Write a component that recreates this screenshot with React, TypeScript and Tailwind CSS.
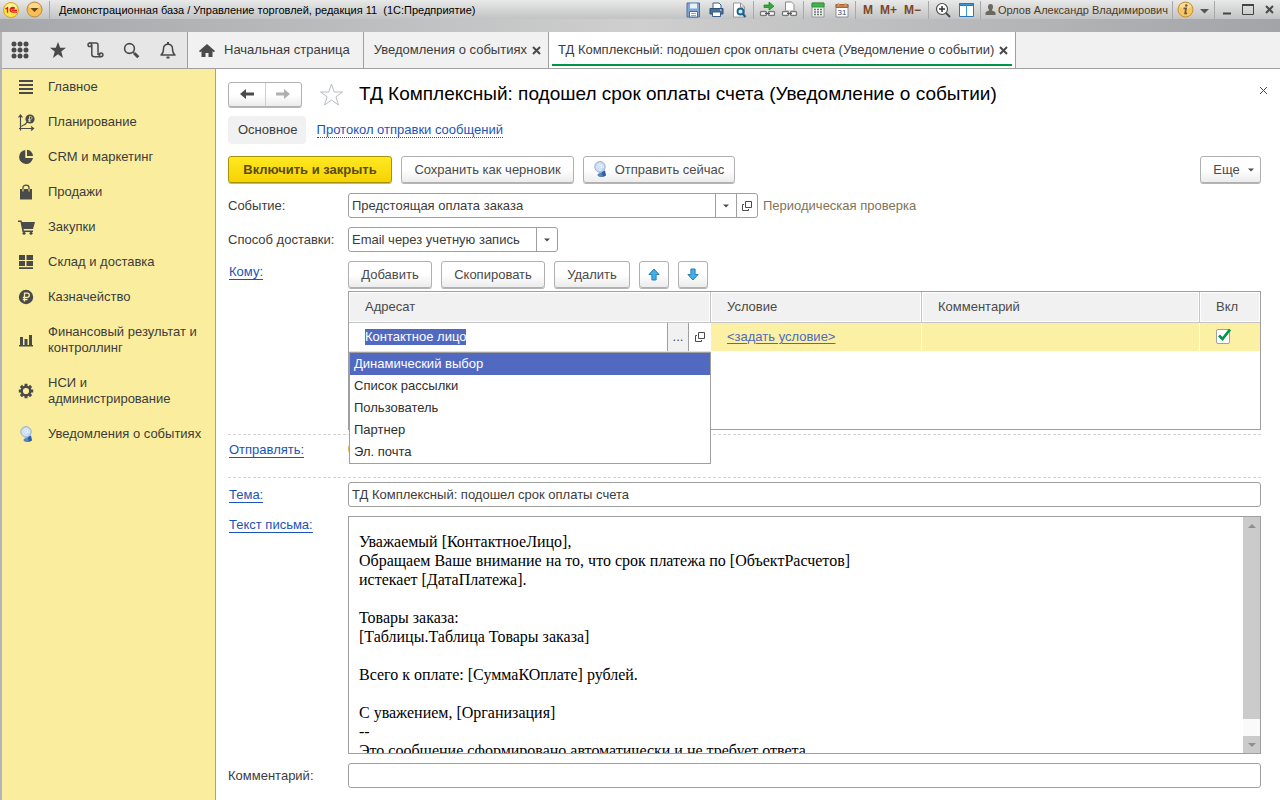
import React, { useEffect, useRef, useState } from "react";
import clsx from "clsx";

type IconProps = { className?: string };

const LogoIcon = () => (
  <svg width="16" height="16" viewBox="0 0 16 16">
    <circle cx="8" cy="8" r="7.5" fill="#fbe14a" stroke="#d9a520" />
    <ellipse cx="8" cy="5" rx="5.5" ry="3.5" fill="#fff6b0" opacity="0.8" />
    <path d="M2.500 7 4.500 5.700V10.800M11.800 6.400A2.600 2.300 0 1 0 9.500 10.100H14M11 7.500A1.100 1 0 1 0 9.700 8.400H14" fill="none" stroke="#d8201c" strokeWidth="1.300" />
  </svg>
);

const MenuCircleIcon = () => (
  <svg width="17" height="17" viewBox="0 0 17 17">
    <circle cx="8.500" cy="8.500" r="7.500" fill="#f8bd57" stroke="#b88a3c" />
    <ellipse cx="8.500" cy="5" rx="5.500" ry="3" fill="#fde0a0" opacity="0.800" />
    <path d="M4.500 7h8l-4 4z" fill="#6b4a18" />
  </svg>
);

const SaveIcon = () => (
  <svg width="15" height="16" viewBox="0 0 15 16">
    <path d="M1 1h12.500v14H1z" fill="#7fa6d6" stroke="#48709f" />
    <path d="M4 1.500h7v5H4z" fill="#e8f0f8" />
    <path d="M3.500 9.500h8V15h-8z" fill="#fff" stroke="#48709f" />
    <path d="M5 11.500h5M5 13.500h5" stroke="#93a9c1" />
  </svg>
);

const PrinterIcon = () => (
  <svg width="15" height="15" viewBox="0 0 15 15">
    <path d="M4 1h6l2 2v4H4z" fill="#fff" stroke="#3c5f86" />
    <path d="M1 6.500h13V12H1z" fill="#47709c" stroke="#2f5077" />
    <path d="M3.500 10h8v4.500h-8z" fill="#fff" stroke="#3c5f86" />
    <path d="M11 8h1.500" stroke="#fff" />
  </svg>
);

const PreviewIcon = () => (
  <svg width="15" height="16" viewBox="0 0 15 16">
    <path d="M1.500 1h7l4 4v10h-11z" fill="#fff" stroke="#9a9a9a" />
    <path d="M8.500 1v4h4" fill="none" stroke="#9a9a9a" />
    <circle cx="8.500" cy="9.500" r="3" fill="#cfe6f3" stroke="#1c628f" strokeWidth="1.800" />
    <path d="m10.800 12 2.700 3" stroke="#1c628f" strokeWidth="2.200" />
  </svg>
);

const LinkIcon = ({ arrow }: { arrow?: boolean }) => (
  <svg width="17" height="17" viewBox="0 0 17 17">
    {arrow ? (
      <path d="M5 4h5V1l5 4.200-5 4V6.500H5z" fill="#2fae35" stroke="#1c7d24" strokeWidth="0.700" />
    ) : (
      <path d="M4.500 1h6l2.500 2.500V10h-8.500z" fill="#fff" stroke="#8b8b8b" />
    )}
    <path d="M2 9.500h13v6H2z" fill="#e9e9e9" />
    <rect x="1.500" y="10.500" width="6" height="4" rx="1" fill="#fff" stroke="#777" strokeWidth="1.300" />
    <rect x="9.500" y="10.500" width="6" height="4" rx="1" fill="#fff" stroke="#777" strokeWidth="1.300" />
    <path d="M6 12.500h5" stroke="#555" strokeWidth="1.300" />
  </svg>
);

const CalculatorIcon = () => (
  <svg width="14" height="16" viewBox="0 0 14 16">
    <path d="M1 1h12v14H1z" fill="#f3f3f3" stroke="#8f9b8f" />
    <path d="M1 1h12v4H1z" fill="#3cb54a" stroke="#3a9044" />
    <path d="M3 7.500h8M3 10h8M3 12.500h8" stroke="#6c7a6c" strokeWidth="1.500" strokeDasharray="2 1" />
  </svg>
);

const CalendarIcon = () => (
  <svg width="14" height="16" viewBox="0 0 14 16">
    <path d="M1 2.500h12V15H1z" fill="#fff" stroke="#8a8f98" />
    <path d="M1 2.500h12v3H1z" fill="#c87e4a" stroke="#a5673b" />
    <path d="M3.500 1v3M10.500 1v3" stroke="#d9a27c" strokeWidth="1.500" />
    <text x="7" y="13" textAnchor="middle" fontSize="8" fill="#3b4d66" fontFamily="Liberation Sans, sans-serif">31</text>
  </svg>
);

const ZoomIcon = () => (
  <svg width="16" height="16" viewBox="0 0 16 16" fill="none">
    <circle cx="7" cy="7" r="5.500" fill="#fff" stroke="#4a4a4a" strokeWidth="1.200" />
    <path d="M4 7h6M7 4v6" stroke="#333" strokeWidth="1.500" />
    <path d="m11 11 4 4" stroke="#4a4a4a" strokeWidth="2" />
  </svg>
);

const PanelsIcon = () => (
  <svg width="15" height="16" viewBox="0 0 15 16">
    <path d="M.5 1.500h14v13H.5z" fill="#fff" stroke="#2d78b0" />
    <path d="M.5 1.500h14v2H.5z" fill="#3a95d6" stroke="#2d78b0" />
    <path d="M7.500 3v11" stroke="#3a95d6" />
  </svg>
);

const UserIcon = () => (
  <svg width="11" height="12" viewBox="0 0 11 12" fill="#6b6862">
    <ellipse cx="5.500" cy="3" rx="2.500" ry="3" />
    <path d="M.5 11V9c0-1.500 2-2 3.500-2.500V5h3v1.500C8.500 7 10.500 7.500 10.500 9v2z" />
  </svg>
);

const InfoIcon = () => (
  <svg width="17" height="17" viewBox="0 0 17 17">
    <circle cx="8.500" cy="8.500" r="7.500" fill="#f6c667" stroke="#c58f2e" />
    <ellipse cx="8.500" cy="5" rx="5.500" ry="3" fill="#fce5b0" opacity="0.700" />
    <circle cx="9.300" cy="4.500" r="1.300" fill="#6d5a38" />
    <path d="M6.500 7.300h2.600l-1 5h2" fill="none" stroke="#6d5a38" strokeWidth="1.700" />
  </svg>
);

const GridIcon = () => (
  <svg width="18" height="18" viewBox="0 0 18 18" fill="#4a4a4a">
    {[3, 9, 15].map((y) => [3, 9, 15].map((x) => <circle key={`${x}-${y}`} cx={x} cy={y} r="2.500" />))}
  </svg>
);

const StarIcon = () => (
  <svg width="18" height="18" viewBox="0 0 18 18" fill="#4a4a4a">
    <path d="m9 1 2.200 5.800H17l-4.700 3.800L14 17l-5-3.800L4 17l1.700-6.400L1 6.800h5.800z" />
  </svg>
);

const HistoryIcon = () => (
  <svg width="17" height="16" viewBox="0 0 17 16" fill="none" stroke="#4a4a4a" strokeWidth="1.500">
    <path d="M2.500 1H9c1 0 2 .8 2 2v7.500" />
    <circle cx="2.800" cy="2.800" r="1.800" />
    <path d="M4.800 2.800v9.500c0 1.600 1 2.500 2.500 2.500h6.500" />
    <path d="M11 10.500v1.800h2.500" />
    <circle cx="14" cy="12.800" r="1.900" />
  </svg>
);

const SearchIcon = () => (
  <svg width="17" height="17" viewBox="0 0 17 17" fill="none" stroke="#4a4a4a">
    <circle cx="6.500" cy="6.500" r="4.900" strokeWidth="1.600" />
    <path d="m10 10 1.500 1.500" strokeWidth="1.500" />
    <path d="m11.300 11.300 4 4" strokeWidth="3" />
  </svg>
);

const BellIcon = () => (
  <svg width="16" height="18" viewBox="0 0 16 18" fill="none" stroke="#4a4a4a" strokeWidth="1.500">
    <path d="M1 14c2-1.500 2.500-3 2.500-6C3.500 5 5.300 3.200 8 3.200S12.500 5 12.500 8c0 3 .5 4.500 2.500 6z" strokeLinejoin="round" />
    <path d="M8 3V1M6.500 16.500h3" strokeWidth="2" />
  </svg>
);

const HomeIcon = () => (
  <svg width="16" height="13" viewBox="0 0 16 13" fill="#4a4a4a">
    <path d="M8 0 0 7l1 1.200 1.500-1V13h4V9h3v4h4V7.200l1.500 1L16 7z" />
  </svg>
);

const ListIcon = () => (
  <svg width="16" height="16" viewBox="0 0 16 16">
    <path d="M1 2h14M1 6h14M1 10h14M1 14h14" stroke="#4a4a4a" strokeWidth="2" />
  </svg>
);

const PlanIcon = () => (
  <svg width="17" height="17" viewBox="0 0 17 17" className="shrink-0" fill="none" stroke="#4a4a4a" strokeWidth="1.200">
    <path d="M2.500 16.500V2M.5 3.500 2.500 1l2 2.500M1 14.500h14M13 12.500l2.500 2-2.500 2M3.500 12.500c1.500-2 2.500-1 4-2.500l1.500-2" />
    <circle cx="12" cy="5" r="4.600" fill="#4a4a4a" stroke="none" />
    <path d="M11.500 8V2.500h1c2 0 2 2.800 0 2.800H10M10 7h3" stroke="#fbed9e" strokeWidth="0.800" />
  </svg>
);

const PieIcon = () => (
  <svg width="16" height="16" viewBox="0 0 16 16" fill="#4a4a4a">
    <path d="M7.300 1A7 7 0 1 0 15 9H7.300z" />
    <path d="M9 .8V7h6A6.300 6.300 0 0 0 9 .8z" />
  </svg>
);

const BagIcon = () => (
  <svg width="14" height="16" viewBox="0 0 14 16">
    <path d="M1 5h12v10.500H1z" fill="#4a4a4a" />
    <path d="M4 8V3.500C4 .3 10 .3 10 3.500V8" fill="none" stroke="#4a4a4a" strokeWidth="1.300" />
    <path d="M4 5v2.500M10 5v2.500" stroke="#fbed9e" />
  </svg>
);

const CartIcon = () => (
  <svg width="17" height="15" viewBox="0 0 17 15" className="shrink-0" fill="#4a4a4a">
    <path d="M0 .5h3.500L4 2h13l-2 7H5.500l.5 1.500h9V12H4.500L2.500 2H0z" />
    <circle cx="6" cy="13.300" r="1.500" />
    <circle cx="13" cy="13.300" r="1.500" />
  </svg>
);

const WarehouseIcon = () => (
  <svg width="16" height="16" viewBox="0 0 16 16" fill="#4a4a4a">
    <path d="M1 1h6v5H1zM8.500 1H15v5H8.500zM1 7h6v5H1zM8.500 7H15v5H8.500zM1 13.300h14V15H1z" />
  </svg>
);

const RubleIcon = () => (
  <svg width="16" height="16" viewBox="0 0 16 16">
    <circle cx="8" cy="8" r="7.200" fill="#4a4a4a" />
    <path d="M6.500 12.500V4.200h2.700c2.800 0 2.800 4.200 0 4.200H4.800M4.800 10.500h4.700" fill="none" stroke="#fbed9e" strokeWidth="1.300" />
  </svg>
);

const ChartIcon = () => (
  <svg width="16" height="14" viewBox="0 0 16 14" fill="#4a4a4a">
    <path d="M2 4h3v8H2zM6.500 6h3v6h-3zM11 2h3v10h-3zM1 12h14v1.500H1z" />
  </svg>
);

const GearIcon = () => (
  <svg width="16" height="16" viewBox="0 0 16 16" fill="none" stroke="#4a4a4a">
    <circle cx="8" cy="8" r="4.300" strokeWidth="2.400" />
    <path d="M8 .8v2.400M8 12.800v2.400M.8 8h2.400M12.800 8h2.400M2.900 2.900l1.700 1.700M11.400 11.400l1.700 1.700M2.900 13.100l1.700-1.700M11.400 4.600l1.700-1.700" strokeWidth="3" />
  </svg>
);

const MailerIcon = ({ className }: IconProps) => (
  <svg width="13" height="17" viewBox="0 0 13 17" className={clsx("shrink-0", className)}>
    <path d="M5.500 9 4 14.500c1.500 2 5.500 2 7 0L9.500 9z" fill="#9bbbe6" />
    <path d="M3.300 14c1.500 2.800 6.900 2.800 8.700 0-.6-1.500-2-2-3.900-2s-4 .5-4.800 2z" fill="#5584c4" />
    <path d="M7.500 11 11 9.500l1 5-3 1z" fill="#2f5da3" />
    <circle cx="6" cy="5.800" r="5.300" fill="#bdd3ee" stroke="#9bb3d3" strokeWidth="0.900" />
    <circle cx="6" cy="5.800" r="1.400" fill="none" stroke="#f4f9ff" strokeWidth="0.900" />
    <path d="M7.500 4.300v2.200c.6 1.200 2 .5 1.800-1C9 1.900 3.300 1.700 2.800 5.600c-.2 3 2.700 4.300 5 3.200" fill="none" stroke="#f4f9ff" strokeWidth="0.900" />
  </svg>
);

const OpenIcon = () => (
  <svg width="10" height="10" viewBox="0 0 10 10" fill="none" stroke="#4a4a4a">
    <path d="M3.500.5h6v6h-6z" />
    <path d="M2 3.500H.5v6h6V8" />
  </svg>
);

const DownTriangle = () => (
  <svg width="6" height="4" viewBox="0 0 6 4" fill="#4a4a4a">
    <path d="M0 .5h6l-3 3z" />
  </svg>
);

const MoveIcon = ({ down }: { down?: boolean }) => (
  <svg width="12" height="13" viewBox="0 0 12 13" className={down ? "rotate-180" : ""}>
    <path d="M6 1 .9 6.500h3V12h4.200V6.500h3z" fill="#3fb0ea" stroke="#2a7fb5" />
  </svg>
);

const CrossIcon = ({ thin }: { thin?: boolean }) => (
  <svg width="9" height="9" viewBox="0 0 9 9" stroke="#4a4a4a" strokeWidth={thin ? 1 : 2}>
    <path d="m1 1 7 7M8 1 1 8" />
  </svg>
);

const ClockIcon = () => (
  <svg width="16" height="16" viewBox="0 0 16 16" fill="none" stroke="#eba23c" strokeWidth="2">
    <circle cx="8" cy="8" r="7" />
    <path d="M8 4v4h3" />
  </svg>
);

const sections = [
  { title: "Главное", icon: <ListIcon /> },
  { title: "Планирование", icon: <PlanIcon /> },
  { title: "CRM и маркетинг", icon: <PieIcon /> },
  { title: "Продажи", icon: <BagIcon /> },
  { title: "Закупки", icon: <CartIcon /> },
  { title: "Склад и доставка", icon: <WarehouseIcon /> },
  { title: "Казначейство", icon: <RubleIcon /> },
  { title: "Финансовый результат и контроллинг", icon: <ChartIcon /> },
  { title: "НСИ и администрирование", icon: <GearIcon /> },
  { title: "Уведомления о событиях", icon: <MailerIcon /> },
];

const recipientKinds = ["Динамический выбор", "Список рассылки", "Пользователь", "Партнер", "Эл. почта"];

const letter = `Уважаемый [КонтактноеЛицо],
Обращаем Ваше внимание на то, что срок платежа по [ОбъектРасчетов]
истекает [ДатаПлатежа].

Товары заказа:
[Таблицы.Таблица Товары заказа]

Всего к оплате: [СуммаКОплате] рублей.

С уважением, [Организация]
--
Это сообщение сформировано автоматически и не требует ответа.`;

const Divider = () => <span className="h-[18px] w-px bg-[#a9a9a9]" />;

const TitleBar = () => (
  <header className="bg-linear-to-r from-[#a6a7ab] via-[#cfcfcf] to-[#a3a4a8]">
    <div className="flex h-[19px] items-center bg-linear-to-b from-[#e9e9e9] to-[#c2c3c4] pl-[3px] pr-[6px] text-[11px] text-black">
      <LogoIcon />
      <button type="button" aria-label="Главное меню" className="ml-[7px] mr-[6px]">
        <MenuCircleIcon />
      </button>
      <Divider />
      <span className="ml-[9px] flex-1 truncate whitespace-pre">
        Демонстрационная база / Управление торговлей, редакция 11  (1С:Предприятие)
      </span>
      <div className="flex items-center gap-2">
        <button type="button" aria-label="Сохранить"><SaveIcon /></button>
        <button type="button" aria-label="Печать"><PrinterIcon /></button>
        <button type="button" aria-label="Предварительный просмотр"><PreviewIcon /></button>
      </div>
      <div className="ml-[6px] flex items-center gap-[5px]">
        <Divider />
        <button type="button" aria-label="Получить ссылку"><LinkIcon arrow /></button>
        <button type="button" aria-label="Перейти по ссылке"><LinkIcon /></button>
        <Divider />
      </div>
      <div className="ml-[7px] mr-[6px] flex items-center gap-[10px]">
        <button type="button" aria-label="Калькулятор"><CalculatorIcon /></button>
        <button type="button" aria-label="Календарь"><CalendarIcon /></button>
      </div>
      <Divider />
      <div className="mx-[7px] flex items-center gap-[7px] text-[12px] font-bold text-[#7c4526]">
        <button type="button">M</button>
        <button type="button">M+</button>
        <button type="button">M−</button>
      </div>
      <Divider />
      <div className="mx-[6px] flex items-center gap-2">
        <button type="button" aria-label="Масштаб"><ZoomIcon /></button>
        <button type="button" aria-label="Панели"><PanelsIcon /></button>
      </div>
      <Divider />
      <button type="button" className="mx-1 flex items-center gap-[2px] text-[#4b3a1e]">
        <UserIcon />
        Орлов Александр Владимирович
      </button>
      <Divider />
      <button type="button" aria-label="Справка" className="ml-1 mr-[5px] flex items-center gap-[6px]">
        <InfoIcon />
        <svg width="9" height="9" viewBox="0 0 9 9" fill="#555"><path d="M0 4h9L4.500 8.500z" /></svg>
      </button>
      <Divider />
      <div className="ml-2 flex items-center gap-[11px]">
        <svg width="8" height="10" viewBox="0 0 8 10"><path d="M0 8.500h8" stroke="#444" strokeWidth="2" /></svg>
        <svg width="12" height="11" viewBox="0 0 12 11" fill="none" stroke="#444"><path d="M.5 1h11v9.500H.5z" /><path d="M0 1h12" strokeWidth="2" /></svg>
        <CrossIcon />
      </div>
    </div>
    <div className="h-[13px]" />
  </header>
);

const TabBar = () => (
  <nav className="flex h-[37px] border-b border-[#9f9f9f] bg-[#f1f1f1] text-[#3c3c3c]">
    <div className="flex w-[186px] shrink-0 items-center justify-between border-r border-[#9f9f9f] bg-[#e6e6e6] pl-[9px] pr-[11px]">
      <button type="button" aria-label="Меню функций"><GridIcon /></button>
      <button type="button" aria-label="Избранное"><StarIcon /></button>
      <button type="button" aria-label="История"><HistoryIcon /></button>
      <button type="button" aria-label="Поиск"><SearchIcon /></button>
      <button type="button" aria-label="Оповещения"><BellIcon /></button>
    </div>
    <button type="button" className="flex items-center gap-[9px] whitespace-nowrap border-r border-[#9f9f9f] pl-[11px] pr-[13px]">
      <HomeIcon />
      Начальная страница
    </button>
    <div className="flex items-center gap-[5px] whitespace-nowrap border-r border-[#9f9f9f] pl-[10px] pr-[7px]">
      <a href="#events">Уведомления о событиях</a>
      <button type="button" aria-label="Закрыть вкладку"><CrossIcon /></button>
    </div>
    <div className="border-r border-[#9f9f9f] bg-white px-[3px] pb-[2px]">
      <div className="flex h-full items-center gap-[5px] whitespace-nowrap border-b-2 border-[#009646] pl-[6px] pr-1 pt-1">
        <a href="#event">ТД Комплексный: подошел срок оплаты счета (Уведомление о событии)</a>
        <button type="button" aria-label="Закрыть вкладку"><CrossIcon /></button>
      </div>
    </div>
  </nav>
);

const Sidebar = () => (
  <aside className="w-[214px] shrink-0 border-r border-[#b8a648] bg-[#fbed9e] pl-4 pr-3 pt-[10px]">
    <ul className="flex flex-col gap-[19px] leading-4 text-[#3c3c3c]">
      {sections.map((section) => (
        <li key={section.title}>
          <a href="#section" className="flex items-center gap-[14px]">
            <span className="flex h-4 w-4 shrink-0 items-center justify-center">{section.icon}</span>
            {section.title}
          </a>
        </li>
      ))}
    </ul>
  </aside>
);

type ButtonProps = React.ButtonHTMLAttributes<HTMLButtonElement> & { primary?: boolean };

const Button = ({ primary, className, children, ...rest }: ButtonProps) => (
  <button
    type="button"
    className={clsx(
      "flex h-[27px] items-center justify-center whitespace-nowrap rounded-[3px] border shadow-[0_1px_0_#b5b5b5]",
      primary
        ? "border-[#a8920a] bg-linear-to-b from-[#ffe81f] to-[#f5d300] font-bold text-[#5a4a10]"
        : "border-[#b0b0b0] bg-linear-to-b from-white from-50% to-[#ececec] text-[#4a4a4a]",
      className
    )}
    {...rest}
  >
    {children}
  </button>
);

type SelectFieldProps = { id: string; value: string; className: string; children?: React.ReactNode };

const SelectField = ({ id, value, className, children }: SelectFieldProps) => (
  <div className={clsx("flex h-[25px] rounded-[3px] border border-[#9f9f9f] bg-white", className)}>
    <select id={id} defaultValue={value} className="min-w-0 flex-1 appearance-none bg-transparent pl-[3px] outline-none">
      <option>{value}</option>
    </select>
    <span className="pointer-events-none flex w-[21px] items-center justify-center border-l border-[#9f9f9f]">
      <DownTriangle />
    </span>
    {children}
  </div>
);

const labelClass = "w-[120px] shrink-0";
const linkClass = "border-b border-[#1a54b8] leading-[14px] text-[#1a54b8]";
const inputClass = "h-[25px] min-w-0 flex-1 rounded-[3px] border border-[#9f9f9f] bg-white px-[3px] outline-none";

const RecipientCell = () => {
  const [recipient, setRecipient] = useState("Контактное лицо");
  const inputRef = useRef<HTMLInputElement>(null);

  useEffect(() => {
    inputRef.current?.focus();
    inputRef.current?.select();
  }, []);

  return (
    <div className="relative flex h-7 bg-white">
      <input
        ref={inputRef}
        aria-label="Адресат"
        value={recipient}
        onChange={(e) => setRecipient(e.target.value)}
        className="min-w-0 flex-1 pl-4 leading-4 outline-none selection:bg-[#5169c1] selection:text-white"
      />
      <button type="button" aria-label="Выбрать" className="w-[22px] border-x border-[#9f9f9f] bg-[#f1f1f1]">
        ...
      </button>
      <button type="button" aria-label="Открыть" className="flex w-[22px] items-center justify-center">
        <OpenIcon />
      </button>
      <ul role="listbox" className="absolute inset-x-0 top-[29px] z-10 border border-[#9f9f9f] bg-white leading-[22px]">
        {recipientKinds.map((kind, index) => (
          <li
            key={kind}
            role="option"
            aria-selected={index === 0}
            onClick={() => setRecipient(kind)}
            className={clsx("px-1", index === 0 ? "bg-[#5169c1] text-white" : "text-[#2f2f2f]")}
          >
            {kind}
          </li>
        ))}
      </ul>
    </div>
  );
};

const headCell = "border-b border-r border-[#c4c4c4] bg-[#f1f1f1] bg-clip-padding pl-4 text-left font-normal shadow-[inset_0_0_0_1px_#fff]";

const RecipientsTable = () => (
  <div className="h-[139px] border border-[#9f9f9f]">
    <table className="w-full table-fixed border-separate border-spacing-0 text-[#4a4a4a]">
      <thead>
        <tr className="h-[31px]">
          <th className={clsx(headCell, "w-[362px]")}>Адресат</th>
          <th className={clsx(headCell, "w-[211px]")}>Условие</th>
          <th className={headCell}>Комментарий</th>
          <th className={clsx(headCell, "w-[60px] border-r-0")}>Вкл</th>
        </tr>
      </thead>
      <tbody>
        <tr className="h-[29px]">
          <td className="border-b border-[#e2e2e2] p-0">
            <RecipientCell />
          </td>
          <td className="border-b border-r border-white bg-[#fcf0a4] pl-4">
            <a href="#condition" className="text-[#5169c1] underline underline-offset-2">&lt;задать условие&gt;</a>
          </td>
          <td className="border-b border-r border-white bg-[#fcf0a4]" />
          <td className="border-b border-white bg-[#fcf0a4] pl-4">
            <label className="relative block h-4 w-4">
              <input
                type="checkbox"
                defaultChecked
                aria-label="Вкл"
                className="block h-[15px] w-[14px] appearance-none rounded-[2px] border border-[#9f9f9f] bg-white"
              />
              <svg width="14" height="14" viewBox="0 0 14 14" className="pointer-events-none absolute -top-px left-[2px]">
                <path d="M1 7.500 4.500 11 12 1.500" fill="none" stroke="#009646" strokeWidth="2.700" />
              </svg>
            </label>
          </td>
        </tr>
      </tbody>
    </table>
  </div>
);

const LetterEditor = () => (
  <div className="flex min-w-0 flex-1 border border-[#9f9f9f]">
    <textarea
      id="letter"
      defaultValue={letter}
      className="min-w-0 flex-1 resize-none overflow-hidden px-[10px] pt-[15px] font-['Liberation_Serif',serif] text-[16px] leading-[19px] text-black outline-none"
    />
    <div className="flex w-[17px] flex-col bg-[#fafafa]">
      <button type="button" aria-label="Прокрутить вверх" className="flex h-[17px] items-center justify-center bg-[#cbcbcb]">
        <svg width="8" height="4" viewBox="0 0 8 4" fill="#8f8f8f"><path d="M0 4h8L4 0z" /></svg>
      </button>
      <div className="mb-[17px] flex-1 bg-[#cbcbcb]" />
      <button type="button" aria-label="Прокрутить вниз" className="flex h-[17px] items-center justify-center bg-[#cbcbcb]">
        <svg width="8" height="4" viewBox="0 0 8 4" fill="#8f8f8f"><path d="M0 0h8L4 4z" /></svg>
      </button>
    </div>
  </div>
);

const EventForm = () => (
  <main className="flex min-w-0 flex-1 flex-col bg-white pb-3 pl-3 pr-[19px] pt-3 text-[#3c3c3c]">
    <div className="flex items-center">
      <div className="flex h-[25px] w-[74px] rounded-[3px] border border-[#b0b0b0] bg-linear-to-b from-white from-50% to-[#ececec] shadow-[0_1px_0_#b5b5b5]">
        <button type="button" aria-label="Назад" className="flex flex-1 items-center justify-center border-r border-[#cfcfcf]">
          <svg width="14" height="10" viewBox="0 0 14 10" fill="#4a4a4a"><path d="M0 5 6 0v3.500h8v3H6V10z" /></svg>
        </button>
        <button type="button" aria-label="Вперед" className="flex flex-1 items-center justify-center">
          <svg width="14" height="10" viewBox="0 0 14 10" fill="#b0b0b0"><path d="M14 5 8 0v3.500H0v3h8V10z" /></svg>
        </button>
      </div>
      <button type="button" aria-label="В избранное" className="ml-[17px]">
        <svg width="25" height="25" viewBox="0 0 25 25" fill="none" stroke="#b7bcc4">
          <path d="m12.500 2 2.700 8h8.300l-6.600 4.800 2.600 8.200-7-5-7 5 2.600-8.200L1.500 10h8.300z" />
        </svg>
      </button>
      <h1 className="ml-[15px] flex-1 truncate text-[19px] leading-[26px] text-black">
        ТД Комплексный: подошел срок оплаты счета (Уведомление о событии)
      </h1>
      <button type="button" aria-label="Закрыть" className="-mr-[7px] mb-2"><CrossIcon thin /></button>
    </div>

    <div className="mt-[9px] flex h-7 items-center">
      <a href="#main" className="rounded-[4px] bg-[#f1f1f1] pl-[10px] pr-2 leading-7">Основное</a>
      <a href="#log" className="ml-[11px] border-b border-dotted border-[#1a54b8] leading-[14px] text-[#1a54b8]">
        Протокол отправки сообщений
      </a>
    </div>

    <div className="mt-3 flex gap-[9px]">
      <Button primary className="w-[164px]">Включить и закрыть</Button>
      <Button className="w-[173px]">Сохранить как черновик</Button>
      <Button className="w-[152px] gap-2">
        <MailerIcon />
        Отправить сейчас
      </Button>
      <Button className="ml-auto w-[61px] gap-2 pl-[6px]">
        Еще
        <DownTriangle />
      </Button>
    </div>

    <div className="mt-[10px] flex items-center">
      <label htmlFor="event" className={labelClass}>Событие:</label>
      <SelectField id="event" value="Предстоящая оплата заказа" className="w-[410px]">
        <button type="button" aria-label="Открыть событие" className="flex w-[21px] items-center justify-center border-l border-[#9f9f9f]">
          <OpenIcon />
        </button>
      </SelectField>
      <span className="ml-[5px] text-[#7f7456]">Периодическая проверка</span>
    </div>

    <div className="mt-[9px] flex items-center">
      <label htmlFor="delivery" className={labelClass}>Способ доставки:</label>
      <SelectField id="delivery" value="Email через учетную запись" className="w-[210px]" />
    </div>

    <div className="mt-[9px] flex">
      <div className={clsx(labelClass, "pl-px pt-[2px]")}>
        <a href="#to" className={linkClass}>Кому:</a>
      </div>
      <div className="min-w-0 flex-1">
        <div className="mb-[3px] flex gap-[9px]">
          <Button className="w-[84px]">Добавить</Button>
          <Button className="w-[104px]">Скопировать</Button>
          <Button className="w-[76px]">Удалить</Button>
          <Button aria-label="Переместить вверх" className="w-[30px]"><MoveIcon /></Button>
          <Button aria-label="Переместить вниз" className="w-[30px]"><MoveIcon down /></Button>
        </div>
        <RecipientsTable />
      </div>
    </div>

    <div className="mt-1 flex h-[44px] items-start border-y border-dashed border-[#d4d4d4] pt-[6px]">
      <div className={clsx(labelClass, "pl-px")}>
        <a href="#schedule" className={linkClass}>Отправлять:</a>
      </div>
      <ClockIcon />
    </div>

    <div className="mt-1 flex items-center">
      <div className={clsx(labelClass, "pl-px")}>
        <a href="#subject" className={linkClass}>Тема:</a>
      </div>
      <input aria-label="Тема" defaultValue="ТД Комплексный: подошел срок оплаты счета" className={inputClass} />
    </div>

    <div className="mt-[9px] flex min-h-[238px] flex-1">
      <label htmlFor="letter" className={clsx(labelClass, "pl-px")}>
        <a href="#text" className={linkClass}>Текст письма:</a>
      </label>
      <LetterEditor />
    </div>

    <div className="mt-[9px] flex items-center">
      <label htmlFor="comment" className={labelClass}>Комментарий:</label>
      <input id="comment" className={inputClass} />
    </div>
  </main>
);

const App = () => (
  <div className="flex min-h-screen flex-col bg-[#b3b4b8] font-['Liberation_Sans',Arial,sans-serif] text-[13px] leading-[18px]">
    <TitleBar />
    <div className="flex flex-1 flex-col pl-[2px]">
      <TabBar />
      <div className="flex flex-1">
        <Sidebar />
        <EventForm />
      </div>
    </div>
  </div>
);

export default App;
